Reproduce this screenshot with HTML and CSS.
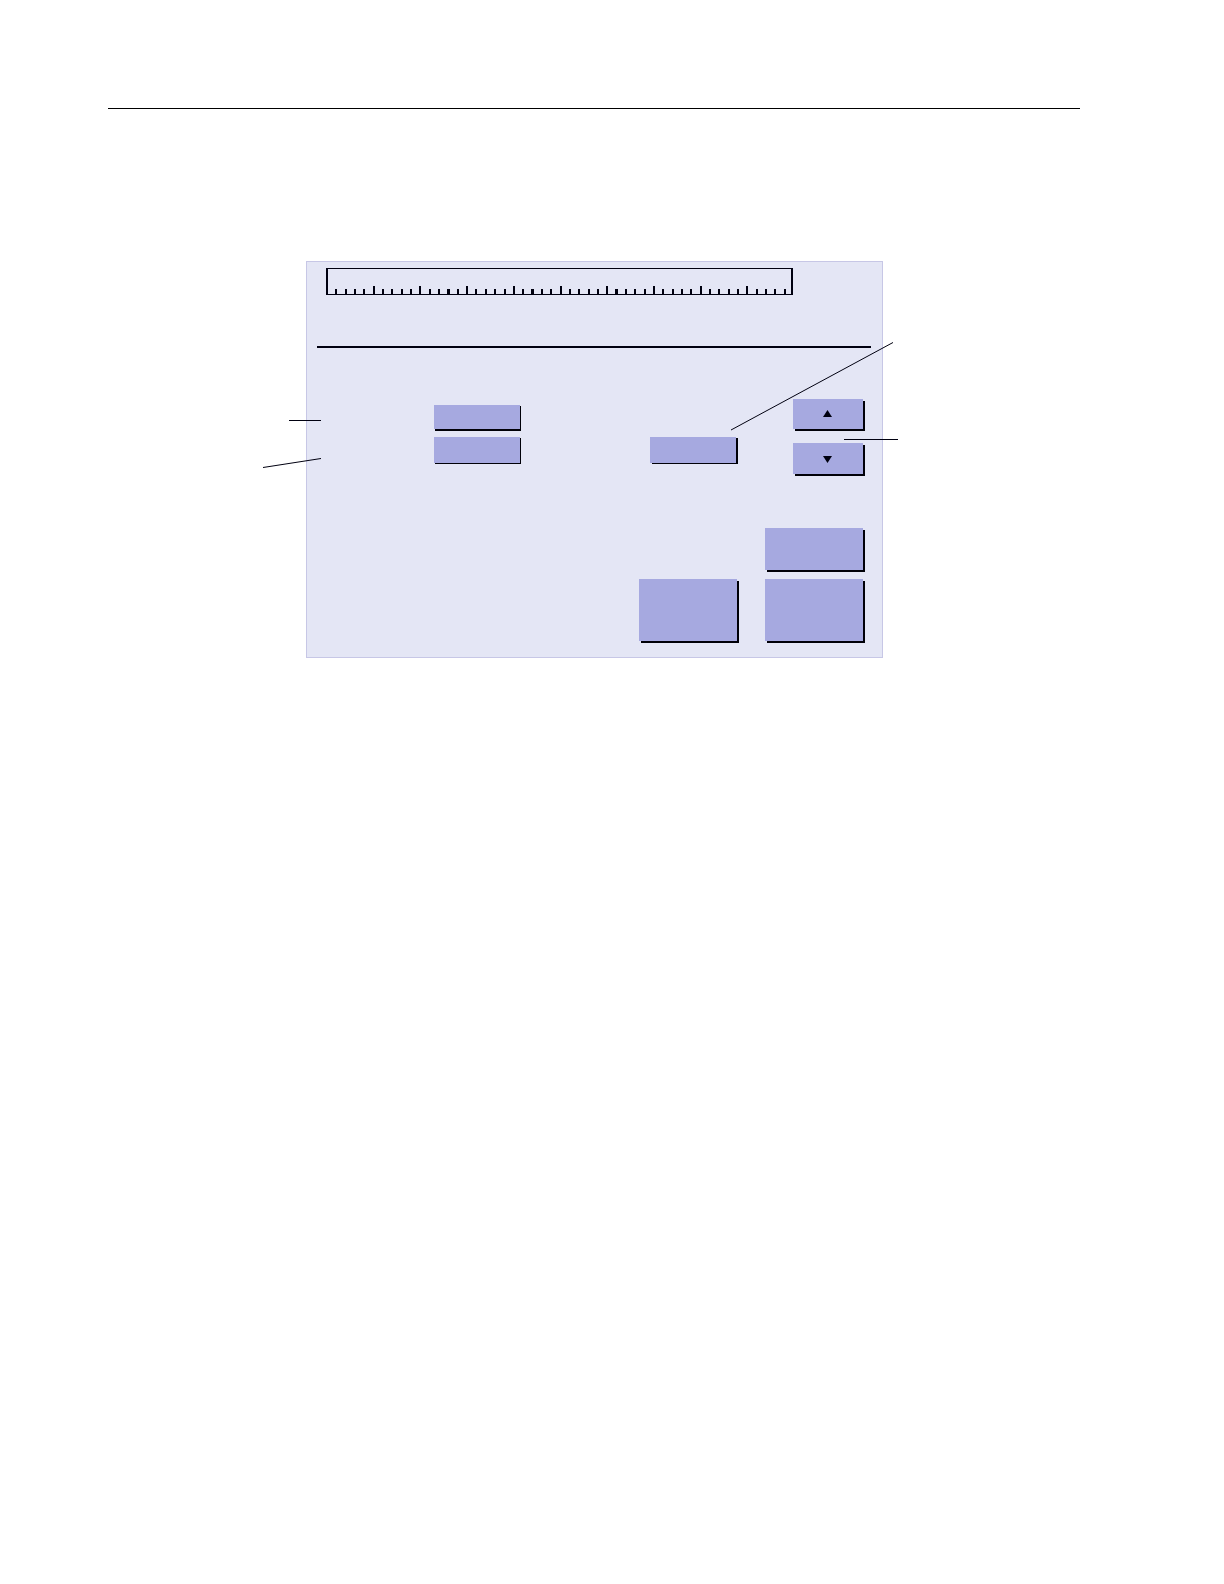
FILE: index.html
```html
<!DOCTYPE html>
<html lang="en">
<head>
  <meta charset="utf-8">
  <meta name="viewport" content="width=device-width, initial-scale=1">
  <title>Control panel</title>
  <link rel="stylesheet" href="styles.css">
</head>
<body>
  <main class="page">
    <hr class="page-rule">
    <figure class="figure">
      <section class="panel" aria-label="Control panel">
        <svg class="ruler" viewBox="0 0 467 27" preserveAspectRatio="xMinYMin meet" shape-rendering="crispEdges" aria-hidden="true">
          <path d="M0 0H467V27H0ZM2 1V26H465V1Z" fill-rule="evenodd"/>
          <!-- minor ticks -->
          <path d="M9 21h2v5h-2zM19 21h2v5h-2zM28 21h2v5h-2zM37 21h2v5h-2zM56 21h2v5h-2zM65 21h2v5h-2zM75 21h2v5h-2zM84 21h2v5h-2zM103 21h2v5h-2zM112 21h2v5h-2zM121 21h3v5h-3zM131 21h2v5h-2zM149 21h2v5h-2zM159 21h2v5h-2zM168 21h2v5h-2zM178 21h2v5h-2zM196 21h2v5h-2zM205 21h3v5h-3zM215 21h2v5h-2zM224 21h2v5h-2zM243 21h2v5h-2zM252 21h2v5h-2zM262 21h2v5h-2zM271 21h2v5h-2zM289 21h3v5h-3zM299 21h2v5h-2zM308 21h2v5h-2zM318 21h2v5h-2zM336 21h2v5h-2zM346 21h2v5h-2zM355 21h2v5h-2zM364 21h2v5h-2zM383 21h2v5h-2zM392 21h2v5h-2zM402 21h2v5h-2zM411 21h2v5h-2zM430 21h2v5h-2zM439 21h2v5h-2zM448 21h2v5h-2zM458 21h2v5h-2z"/>
          <!-- major ticks -->
          <path d="M47 18h2v8h-2zM93 18h2v8h-2zM140 18h2v8h-2zM187 18h2v8h-2zM234 18h2v8h-2zM280 18h2v8h-2zM327 18h2v8h-2zM374 18h2v8h-2zM420 18h2v8h-2z"/>
        </svg>
        <hr class="divider">
        <div class="controls">
          <div class="fields">
            <button class="key key-flat" type="button" aria-label="First option"></button>
            <button class="key key-thin field-second" type="button" aria-label="Second option"></button>
            <button class="key key-side field-third" type="button" aria-label="Third option"></button>
          </div>
          <div class="scroll">
            <button class="key" type="button" aria-label="Up">
              <svg class="arrow" viewBox="0 0 10 8" aria-hidden="true"><path d="M4.500 0L9 7H0Z"/></svg>
            </button>
            <button class="key" type="button" aria-label="Down">
              <svg class="arrow" viewBox="0 0 10 8" aria-hidden="true"><path d="M0 1H9L4.500 8Z"/></svg>
            </button>
          </div>
        </div>
        <div class="actions">
          <button class="key action-top" type="button" aria-label="Upper action"></button>
          <button class="key" type="button" aria-label="Left action"></button>
          <button class="key" type="button" aria-label="Right action"></button>
        </div>
      </section>
      <!-- callout lines from the margins into the panel -->
      <svg class="leaders" viewBox="0 0 577 397" aria-hidden="true">
        <path d="M-17 159.500H15M-43 206.500L15 197.500M425 169L587 81.500M538 178.500H592"/>
      </svg>
    </figure>
  </main>
</body>
</html>
```
FILE: styles.css
```css
* {
  box-sizing: border-box;
}

body {
  margin: 0;
  background: #fff;
  font-family: "Liberation Sans", Arial, sans-serif;
}

.page {
  padding: 108px 144px 108px 108px;
}

.page-rule {
  height: 1px;
  margin: 0;
  border: 0;
  background: #000;
}

.figure {
  position: relative;
  max-width: 577px;
  margin: 152px 0 0 198px;
}

.panel {
  padding: 6px 0 16px;
  border: 1px solid #c7c7e6;
  background: #e4e6f5;
}

.ruler {
  display: block;
  width: 467px;
  max-width: 100%;
  margin-left: 19px;
  fill: #000010;
}

.divider {
  height: 2px;
  margin: 51px 11px 0 10px;
  border: 0;
  background: #000010;
}

.controls {
  display: flex;
  justify-content: space-between;
  margin-top: 51px;
  padding: 0 19px 0 127px;
}

.fields {
  display: grid;
  grid-template-columns: 86px 86px;
  grid-template-rows: 24px 26px;
  gap: 8px 130px;
  padding-top: 6px;
}

.field-second {
  grid-area: 2 / 1;
}

.field-third {
  grid-area: 2 / 2;
}

.scroll {
  display: grid;
  grid-template-columns: 70px;
  grid-template-rows: 30px 31px;
  row-gap: 14px;
}

.actions {
  display: grid;
  grid-template-columns: 98px 98px;
  grid-template-rows: 42px 62px;
  gap: 9px 28px;
  justify-content: end;
  margin-top: 54px;
  padding-right: 19px;
}

.action-top {
  grid-column: 2;
}

.key {
  display: flex;
  align-items: center;
  justify-content: center;
  padding: 0;
  border: 0;
  background: #a6a9e0;
  box-shadow: 2px 2px 0 #000008;
}

.key-flat {
  box-shadow: 1px 1px 0 #000008, 1px 2px 0 #000008;
}

.key-thin {
  box-shadow: 1px 1px 0 #000008;
}

.key-side {
  box-shadow: 2px 1px 0 #000008;
}

.arrow {
  width: 10px;
  height: 8px;
  fill: #000010;
}

.leaders {
  position: absolute;
  inset: 0;
  width: 100%;
  height: 100%;
  overflow: visible;
  pointer-events: none;
  fill: none;
  stroke: #000010;
  stroke-width: 1;
}
```
